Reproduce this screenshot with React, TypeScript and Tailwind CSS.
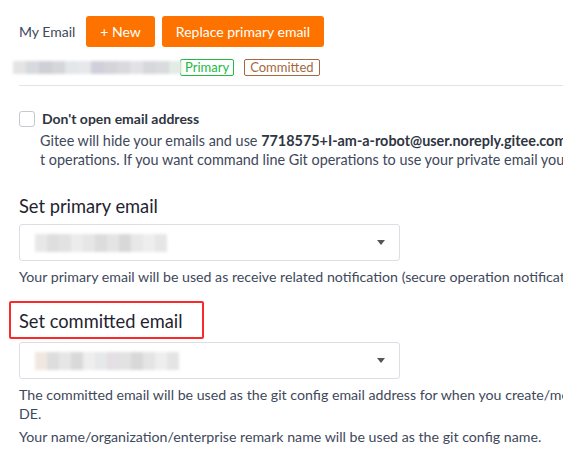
const blurA = ["#e4e4e4", "#d6d9dd", "#cfd0d6", "#d4d6da", "#e3e6ea", "#e6e8ea", "#d1cfdb", "#d4d4da", "#dadade", "#e2e2e6", "#d6d8dc", "#d9dbde", "#e2ece4"];
const blurB = ["#e8e8e8", "#dedede", "#e2e2e2", "#ececec", "#e6e6e6", "#dcdcdc", "#e4e4e4", "#d8d8d8", "#e8e8e8", "#eeeeee", "#e6e6e6"];
const blurC = ["#f0e8e0", "#dddddd", "#e6e6e6", "#d9d9d9", "#eeeeee", "#e6e8ea", "#e4dfe2", "#e2e2e2", "#d8d8d8", "#e4e4e4", "#eeeeee", "#e4e4e4"];

function Blurred({ colors, cell }: { colors: string[]; cell: string }) {
    return (
        <div className="flex blur-[1.5px]">
            {colors.map((c, i) => (
                <span key={i} className={cell} style={{ backgroundColor: c }} />
            ))}
        </div>
    );
}

function Select({ colors }: { colors: string[] }) {
    return (
        <div className="ml-[19px] w-[381px] h-[37px] border border-[#dcdee6] rounded-[3px] flex items-center justify-between pl-[15px] pr-[14px]">
            <Blurred colors={colors} cell="w-[12px] h-[18px]" />
            <span className="w-0 h-0 border-l-[4px] border-r-[4px] border-t-[5px] border-l-transparent border-r-transparent border-t-[#555]" />
        </div>
    );
}

export default function App() {
    return (
        <div className="w-[563px] h-[456px] overflow-hidden bg-white text-[#40485b] text-[14px] font-['Lato','Open_Sans',sans-serif]">
            <div className="flex items-center gap-[7px] pl-[19px] pt-[16px]">
                <span className="mr-[4px]">My Email</span>
                <button className="h-[31px] px-[14px] rounded-[3px] bg-[#fe7300] text-white">+ New</button>
                <button className="h-[31px] px-[14px] rounded-[3px] bg-[#fe7300] text-white">Replace primary email</button>
            </div>

            <div className="flex items-center pl-[13px] mt-[12px] h-[17px]">
                <Blurred colors={blurA} cell="w-[13px] h-[13px]" />
                <span className="ml-[-2px] h-[17px] px-[4px] border border-[#21ba45] rounded-[2px] text-[#21ba45] text-[13px] leading-[15px]">Primary</span>
                <span className="ml-[10px] h-[17px] px-[5px] border border-[#a5673f] rounded-[2px] text-[#a5673f] text-[13px] leading-[15px]">Committed</span>
            </div>

            <div className="ml-[19px] mt-[9px] border-t border-[#e2e3e8]" />

            <div className="flex items-start pl-[19px] mt-[24px]">
                <span className="w-[16px] h-[16px] border border-[#c7c9d1] rounded-[3px] bg-white shrink-0 mt-[1px]" />
                <div className="ml-[7px] whitespace-nowrap text-[14.4px]">
                    <div className="font-bold text-[#2f3541] leading-[18px] text-[14px]">Don't open email address</div>
                    <div className="leading-[19px] mt-[3px] -ml-[2px]">
                        Gitee will hide your emails and use <b className="text-[#2f3541]">7718575+I-am-a-robot@user.noreply.gitee.com</b> for web-based Gi
                    </div>
                    <div className="leading-[19px] -ml-[2px]">
                        t operations. If you want command line Git operations to use your private email you must set it yourself.
                    </div>
                </div>
            </div>

            <div className="pl-[19px] mt-[23px] text-[18.3px] text-[#1f2330] leading-[28px] whitespace-nowrap">Set primary email</div>
            <div className="mt-[4px]">
                <Select colors={blurB} />
            </div>
            <div className="pl-[19px] mt-[6px] leading-[20px] whitespace-nowrap text-[14.2px]">
                Your primary email will be used as receive related notification (secure operation notification and so on).
            </div>

            <div className="ml-[9px] mt-[14px] w-[195px] h-[38px] border-2 border-[#fa2a2a] rounded-[2px] flex items-end pl-[8px] pb-[2px]">
                <span className="text-[18.3px] text-[#1f2330] leading-[28px] whitespace-nowrap">Set committed email</span>
            </div>
            <div className="mt-[3px]">
                <Select colors={blurC} />
            </div>
            <div className="pl-[19px] mt-[6px] leading-[19px] whitespace-nowrap text-[14.2px]">
                <div>The committed email will be used as the git config email address for when you create/modify files on Web I</div>
                <div>DE.</div>
                <div className="mt-[4px]">Your name/organization/enterprise remark name will be used as the git config name.</div>
            </div>
        </div>
    );
}
